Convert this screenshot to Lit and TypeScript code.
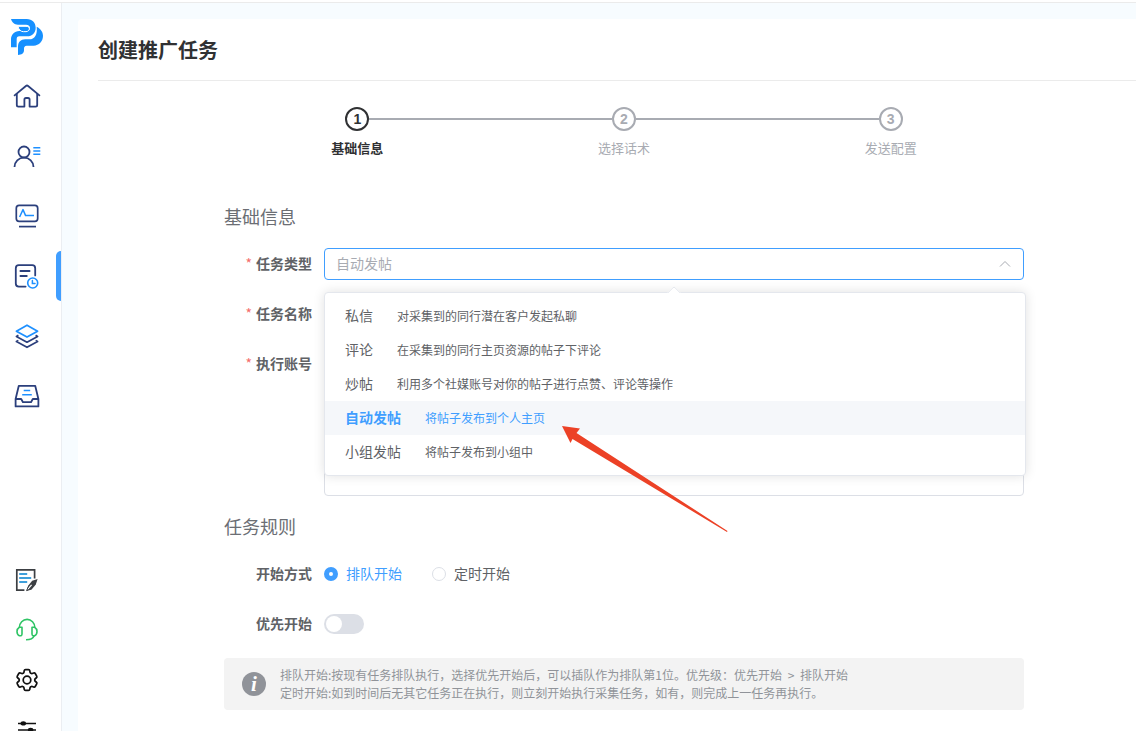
import { LitElement, html, svg, css, nothing } from "lit";
import { customElement, state } from "lit/decorators.js";
import { classMap } from "lit/directives/class-map.js";

const NAVY = "#2b3f7c";
const BLUE = "#1e90ff";

const icons = {
  home: svg`<g fill="none" stroke=${NAVY} stroke-width="1.8" stroke-linecap="round" stroke-linejoin="round">
    <path d="M3.6 15.4 14.9 6q1.1-.9 2.2 0L28.4 15.4"/>
    <path d="M5.8 14V25q0 1.6 1.6 1.6H13.4V19.6q0-1.6 1.6-1.6h2q1.6 0 1.6 1.6V26.6H24.6q1.6 0 1.6-1.6V14"/></g>`,
  user: svg`<g fill="none" stroke-width="1.8">
    <circle cx="13" cy="12" r="5.5" stroke=${NAVY}/>
    <path d="M3.5 27a9.5 9.3 0 0 1 19 0" stroke=${NAVY}/>
    <path d="M22.3 7.7h7M22.3 11h7M22.3 14.2h7" stroke=${BLUE} stroke-width="1.4"/></g>`,
  monitor: svg`<g fill="none" stroke-width="1.7" stroke-linejoin="round">
    <rect x="5.3" y="5.4" width="21.4" height="16" rx="2.8" stroke=${NAVY}/>
    <path d="M8 26.6h17" stroke=${NAVY}/>
    <path d="M8.6 17 12 9.6l2.6 6H23" stroke=${BLUE} stroke-width="1.5"/></g>`,
  task: svg`<g fill="none" stroke-width="1.8" stroke-linecap="round">
    <path d="M24.2 15.4V8.2q0-3-3-3H7.8q-3 0-3 3V23.6q0 3 3 3H14.6" stroke=${NAVY}/>
    <path d="M9.4 11h9.2M9.4 16h6.4" stroke=${NAVY}/>
    <circle cx="21.7" cy="23" r="5" stroke=${BLUE} stroke-width="1.6"/>
    <path d="M21.4 20.6v2.8h2.6" stroke=${BLUE} stroke-width="1.5"/></g>`,
  layers: svg`<g fill="none" stroke-width="1.7" stroke-linejoin="round">
    <path d="M7.4 20.4 5.4 21.6 16 27.3 26.6 21.6 24.6 20.4" stroke=${NAVY}/>
    <path d="M7.4 15.2 5.4 16.4 16 22.2 26.6 16.4 24.6 15.2" stroke=${NAVY}/>
    <path d="M16 5.2 26.6 11.2 16 17.1 5.4 11.2Z" stroke=${BLUE}/></g>`,
  inbox: svg`<g fill="none" stroke-width="1.8" stroke-linejoin="round">
    <path d="M7.8 5.8H24.2L27.4 19V26.4H4.6V19Z" stroke=${NAVY}/>
    <path d="M4.6 19H10.2L12 22.2H20L21.8 19H27.4" stroke=${NAVY}/>
    <path d="M12.7 10.5h6.5M11.2 14.7h9.6" stroke=${BLUE} stroke-width="1.5"/></g>`,
  note: svg`<g fill="none" stroke-width="1.7">
    <path d="M23.6 14.6V5.8H5.8V26.2H13.4" stroke="#3c3f43"/>
    <path d="M8.2 10h8M8.2 14h12M8.2 18h8" stroke="#3f9fda" stroke-width="1.8"/>
    <path d="M26.6 15 21.2 16.8 17.4 21.4 15.6 26.6 20.8 25.2 24.8 20.6Z" fill="#3c3f43"/>
    <path d="M16.4 25.6 20.6 20.8" stroke="#fff" stroke-width="1.2"/>
    <path d="M17.8 21.6 15.6 26.6 20.6 25" stroke="#3c3f43" stroke-width="1"/></g>`,
  headset: svg`<g fill="none" stroke="#2fc465" stroke-width="1.6" stroke-linejoin="round">
    <path d="M8.4 13.4a7.7 8 0 0 1 15.4 0"/>
    <path d="M11 13.2H8.4Q6 14.6 6 17.6 6 20.8 8.4 21.8H10Q11 21.4 11 20Z"/>
    <path d="M21 13.2H23.6Q26 14.6 26 17.6 26 20.8 23.6 21.8H22Q21 21.4 21 20Z"/>
    <path d="M23.2 21.8Q21.6 25.8 15 25.8"/></g>`,
  gear: svg`<g fill="none" stroke="#111" stroke-width="1.5" transform="translate(2.2 2.2) scale(1.15)" stroke-linejoin="round">
    <path d="M9.594 3.94c.09-.542.56-.94 1.11-.94h2.593c.55 0 1.02.398 1.11.94l.213 1.281c.063.374.313.686.645.87.074.04.147.083.22.127.325.196.72.257 1.075.124l1.217-.456a1.125 1.125 0 0 1 1.37.49l1.296 2.247a1.125 1.125 0 0 1-.26 1.431l-1.003.827c-.293.241-.438.613-.43.992a7.723 7.723 0 0 1 0 .255c-.008.378.137.75.43.991l1.004.827c.424.35.534.955.26 1.43l-1.298 2.247a1.125 1.125 0 0 1-1.369.491l-1.217-.456c-.355-.133-.75-.072-1.076.124a6.47 6.47 0 0 1-.22.128c-.331.183-.581.495-.644.869l-.213 1.281c-.09.543-.56.94-1.11.94h-2.594c-.55 0-1.019-.398-1.11-.94l-.213-1.281c-.062-.374-.312-.686-.644-.87a6.52 6.52 0 0 1-.22-.127c-.325-.196-.72-.257-1.076-.124l-1.217.456a1.125 1.125 0 0 1-1.369-.49l-1.297-2.247a1.125 1.125 0 0 1 .26-1.431l1.004-.827c.292-.24.437-.613.43-.991a6.932 6.932 0 0 1 0-.255c.007-.38-.138-.751-.43-.992l-1.004-.827a1.125 1.125 0 0 1-.26-1.43l1.297-2.247a1.125 1.125 0 0 1 1.37-.491l1.216.456c.356.133.751.072 1.076-.124.072-.044.146-.086.22-.128.332-.183.582-.495.644-.869l.214-1.28Z"/>
    <circle cx="12" cy="12" r="3.3"/></g>`,
  sliders: svg`<g stroke="#111" fill="#111" stroke-width="1.5">
    <path d="M7 9.4h18M7 16h18M7 22.6h18"/>
    <ellipse cx="12.3" cy="9.4" rx="2" ry="1.4"/><ellipse cx="19.6" cy="16" rx="2" ry="1.4"/><ellipse cx="12.3" cy="22.6" rx="2" ry="1.4"/></g>`,
};

type IconName = keyof typeof icons;

const icon = (name: IconName) =>
  html`<svg class="icon" viewBox="0 0 32 32" aria-hidden="true">${icons[name]}</svg>`;

const mainNav: { icon: IconName; label: string }[] = [
  { icon: "home", label: "首页" },
  { icon: "user", label: "账号" },
  { icon: "monitor", label: "监控" },
  { icon: "task", label: "任务" },
  { icon: "layers", label: "资源" },
  { icon: "inbox", label: "收件箱" },
];

const toolNav: { icon: IconName; label: string }[] = [
  { icon: "note", label: "反馈" },
  { icon: "headset", label: "客服" },
  { icon: "gear", label: "设置" },
  { icon: "sliders", label: "偏好" },
];

const steps = ["基础信息", "选择话术", "发送配置"];

const taskTypes = [
  { name: "私信", desc: "对采集到的同行潜在客户发起私聊" },
  { name: "评论", desc: "在采集到的同行主页资源的帖子下评论" },
  { name: "炒帖", desc: "利用多个社媒账号对你的帖子进行点赞、评论等操作" },
  { name: "自动发帖", desc: "将帖子发布到个人主页" },
  { name: "小组发帖", desc: "将帖子发布到小组中" },
];

@customElement("app-root")
export class AppRoot extends LitElement {
  @state() private type = "自动发帖";
  @state() private open = true;
  @state() private start = "queue";
  @state() private active = 3;

  static styles = css`
    :host {
      display: block;
      height: 100vh;
      overflow: hidden;
      background: #f7fcff;
      color: #606266;
      font-family: "Noto Sans CJK SC", "Noto Sans", sans-serif;
      font-size: 14px;
      line-height: 20px;
    }
    *, *::before, *::after { box-sizing: border-box; }
    button, input, select, textarea { font: inherit; color: inherit; margin: 0; }
    .shell {
      display: flex;
      height: 100%;
      border-top: 1px solid #ebebeb;
      background: #f7fcff;
    }
    .top { height: 2px; background: #fff; }

    .side {
      flex: none;
      display: flex;
      flex-direction: column;
      width: 62px;
      padding-top: 13px;
      background: #fff;
      border-right: 1px solid #ebeef2;
      overflow: hidden;
    }
    .logo { display: flex; flex: none; height: 50px; padding-left: 10px; }
    .logo svg { width: 34px; height: 38px; margin-top: 2px; }
    .nav { display: flex; flex: none; flex-direction: column; }
    .nav.tools { margin-top: 129px; }
    .nav-item {
      display: flex;
      align-items: center;
      justify-content: space-between;
      flex: none;
      height: 60px;
      padding: 0 0 0 11px;
      border: 0;
      background: none;
      cursor: pointer;
    }
    .tools .nav-item { height: 50px; }
    .nav-item.active::after {
      content: "";
      width: 5px;
      height: 50px;
      background: #409eff;
      border-radius: 5px 0 0 5px;
    }
    .icon { width: 32px; height: 32px; }

    .main { flex: 1; min-width: 0; padding: 16px 0 0 16px; overflow: hidden; }
    .card {
      min-width: 1092px;
      min-height: 100%;
      padding: 0 20px 20px;
      background: #fff;
      border-radius: 4px;
    }
    .title {
      margin: 0;
      padding: 16px 0 15px;
      border-bottom: 1px solid #ebebeb;
      color: #303133;
      font-size: 20px;
      font-weight: 700;
      line-height: 30px;
    }
    .form { width: 800px; margin: 0 auto; }

    .steps { display: flex; margin: 26px 0 0; padding: 0; list-style: none; }
    .step { flex: 1; color: #a8abb2; font-size: 13px; text-align: center; }
    .head { display: flex; align-items: center; }
    .head::before, .head::after { content: ""; flex: 1; height: 2px; background: #a8abb2; }
    .step:first-child .head::before, .step:last-child .head::after { background: none; }
    .dot {
      display: flex;
      align-items: center;
      justify-content: center;
      width: 24px;
      height: 24px;
      border: 2px solid #a8abb2;
      border-radius: 50%;
      font-family: "Liberation Sans", sans-serif;
      font-size: 14px;
      font-weight: 700;
    }
    .step-name { display: block; margin-top: 7px; }
    .current { color: #303133; font-weight: 700; }
    .current .dot { border-color: #303133; }

    .section {
      margin: 0;
      color: #6b6e74;
      font-size: 18px;
      font-weight: 400;
      line-height: 24px;
    }
    .basic { margin-top: 46px; }
    .rows { display: flex; flex-direction: column; gap: 18px; padding: 20px 0 18px; }
    .row { display: grid; grid-template-columns: 88px 1fr; column-gap: 12px; }
    .label { line-height: 30px; text-align: right; font-weight: 700; }
    .required::before { content: "*"; margin-right: 4px; color: #f56c6c; font-weight: 400; }
    .field { position: relative; display: flex; align-items: center; min-height: 32px; }
    .control {
      width: 100%;
      height: 32px;
      padding: 0 11px;
      border: 1px solid #dcdfe6;
      border-radius: 4px;
      background: #fff;
      outline: none;
    }
    textarea.control { height: 148px; resize: none; }
    select.control { appearance: none; padding-bottom: 2px; border-color: #409eff; color: #a8abb2; }
    .caret {
      position: absolute;
      right: 12px;
      width: 14px;
      height: 14px;
      pointer-events: none;
    }

    .menu {
      position: absolute;
      z-index: 2;
      top: 44px;
      left: 0;
      right: -2px;
      padding: 6px 0;
      background: #fff;
      border: 1px solid #e4e7ed;
      border-radius: 4px;
      box-shadow: 0 0 12px rgba(0, 0, 0, 0.12);
    }
    .menu::before {
      content: "";
      position: absolute;
      top: -5px;
      left: calc(50% - 6px);
      width: 10px;
      height: 10px;
      background: #fff;
      border: 1px solid #e4e7ed;
      border-right-color: transparent;
      border-bottom-color: transparent;
      border-radius: 2px 0 0 0;
      transform: rotate(45deg);
    }
    .option {
      display: flex;
      align-items: center;
      gap: 24px;
      width: 100%;
      height: 34px;
      padding: 0 20px;
      border: 0;
      background: none;
      text-align: left;
      cursor: pointer;
    }
    .option span { padding-bottom: 2px; }
    .option small { font-size: 12px; font-weight: 400; }
    .option.selected { position: relative; background: #f5f7fa; color: #409eff; font-weight: 700; }

    .choices { display: flex; gap: 30px; }
    .choice { display: flex; align-items: center; gap: 8px; cursor: pointer; }
    .choice span { padding-bottom: 2px; }
    .radio {
      appearance: none;
      width: 14px;
      height: 14px;
      border: 1px solid #dcdfe6;
      border-radius: 50%;
      background: #fff;
    }
    .radio:checked { border: 5px solid #409eff; }
    .choice.on { color: #409eff; }
    .switch {
      appearance: none;
      display: flex;
      width: 40px;
      height: 20px;
      padding: 2px;
      border-radius: 10px;
      background: #dcdfe6;
      cursor: pointer;
    }
    .switch::before {
      content: "";
      width: 16px;
      height: 16px;
      border-radius: 50%;
      background: #fff;
    }
    .switch:checked { justify-content: flex-end; background: #409eff; }

    .notice {
      display: flex;
      align-items: center;
      gap: 14px;
      padding: 8px 18px;
      border-radius: 4px;
      background: #f3f3f3;
      color: #909399;
      font-size: 12px;
      line-height: 18px;
    }
    .notice p { margin: 0; }
    .before { margin: 0 3px; }
    .info {
      display: flex;
      align-items: center;
      justify-content: center;
      flex: none;
      width: 24px;
      height: 24px;
      border-radius: 50%;
      background: #909399;
      color: #fff;
      font: italic 700 21px/24px "Liberation Serif", serif;
    }
    .pointer {
      position: absolute;
      z-index: 3;
      top: 178px;
      left: 236px;
      width: 170px;
      height: 108px;
      pointer-events: none;
    }
  `;

  private pick(name: string) {
    this.type = name;
    this.open = false;
  }

  private renderSide() {
    return html`<aside class="side">
      <div class="logo">
        <svg viewBox="30 54 102 114" role="img" aria-label="logo">
          <g fill="#1690ff">
            <path d="M33 57H80C97 57 107 69 107 83 107 99 96 108 82 109H58C52 109 50 113 50 118V142H33V119C33 104 43 93 58 93H80C86 93 90 90 90 85 90 78 86 74 78 74H54C43 74 36 67 33 57Z"/>
            <path d="M54 79H78C84 79 88 82 88 86 88 91 84 95 78 95H70C62 95 56 89 54 79Z" stroke="#fff" stroke-width="3"/>
            <path d="M110 80C122 86 129 96 129 107 129 124 117 136 101 137H80C74 137 72 141 72 146V151C72 160 65 165 54 165V140C54 127 62 118 76 118H88C104 118 113 104 110 80Z"/>
          </g>
        </svg>
      </div>
      <nav class="nav">
        ${mainNav.map(
          (n, i) => html`<button
            class=${classMap({ "nav-item": true, active: i === this.active })}
            aria-label=${n.label}
            @click=${() => (this.active = i)}
          >${icon(n.icon)}</button>`
        )}
      </nav>
      <nav class="nav tools">
        ${toolNav.map((n) => html`<button class="nav-item" aria-label=${n.label}>${icon(n.icon)}</button>`)}
      </nav>
    </aside>`;
  }

  private renderTypeField() {
    return html`<div class="field">
      <select
        id="type"
        class="control"
        .value=${this.type}
        @mousedown=${(e: Event) => {
          e.preventDefault();
          this.open = !this.open;
        }}
        @change=${(e: Event) => (this.type = (e.target as HTMLSelectElement).value)}
      >
        ${taskTypes.map((t) => html`<option ?selected=${t.name === this.type}>${t.name}</option>`)}
      </select>
      <svg class="caret" viewBox="0 0 14 14" aria-hidden="true">
        <path d="M2 9.5 7 4.5 12 9.5" fill="none" stroke="#a8abb2" stroke-width="1"/>
      </svg>
      ${this.open
        ? html`<div class="menu" role="listbox" aria-label="任务类型">
              ${taskTypes.map(
                (t) => html`<button
                  role="option"
                  aria-selected=${t.name === this.type}
                  class=${classMap({ option: true, selected: t.name === this.type })}
                  @click=${() => this.pick(t.name)}
                ><span>${t.name}</span><small>${t.desc}</small></button>`
              )}
            </div>
            <svg class="pointer" viewBox="0 0 170 108" aria-hidden="true">
              <path d="M2 0 20 2.5 16.5 7 167.5 105 167 106 12.5 13 10.5 17Z" fill="#ec4126"/>
            </svg>`
        : nothing}
    </div>`;
  }

  private renderRadio(value: string, text: string) {
    const on = this.start === value;
    return html`<label class=${classMap({ choice: true, on })}>
      <input class="radio" type="radio" name="start" .checked=${on} @change=${() => (this.start = value)} />
      <span>${text}</span>
    </label>`;
  }

  render() {
    return html`<div class="top"></div>
      <div class="shell">
        ${this.renderSide()}
        <main class="main">
          <div class="card">
            <h1 class="title">创建推广任务</h1>
            <div class="form">
              <ol class="steps">
                ${steps.map(
                  (s, i) => html`<li class=${classMap({ step: true, current: i === 0 })}>
                    <div class="head"><span class="dot">${i + 1}</span></div>
                    <span class="step-name">${s}</span>
                  </li>`
                )}
              </ol>
              <h2 class="section basic">基础信息</h2>
              <div class="rows">
                <div class="row">
                  <label class="label required" for="type">任务类型</label>
                  ${this.renderTypeField()}
                </div>
                <div class="row">
                  <label class="label required" for="name">任务名称</label>
                  <div class="field"><input id="name" class="control" type="text" /></div>
                </div>
                <div class="row">
                  <label class="label required" for="accounts">执行账号</label>
                  <div class="field"><textarea id="accounts" class="control"></textarea></div>
                </div>
              </div>
              <h2 class="section">任务规则</h2>
              <div class="rows">
                <div class="row">
                  <span class="label" id="start-label">开始方式</span>
                  <div class="field choices" role="radiogroup" aria-labelledby="start-label">
                    ${this.renderRadio("queue", "排队开始")}${this.renderRadio("timed", "定时开始")}
                  </div>
                </div>
                <div class="row">
                  <label class="label" for="priority">优先开始</label>
                  <div class="field"><input id="priority" class="switch" type="checkbox" role="switch" /></div>
                </div>
              </div>
              <div class="notice">
                <span class="info" aria-hidden="true">i</span>
                <div>
                  <p>排队开始:按现有任务排队执行，选择优先开始后，可以插队作为排队第1位。优先级：优先开始 <span class="before">&gt;</span> 排队开始</p>
                  <p>定时开始:如到时间后无其它任务正在执行，则立刻开始执行采集任务，如有，则完成上一任务再执行。</p>
                </div>
              </div>
            </div>
          </div>
        </main>
      </div>`;
  }
}
